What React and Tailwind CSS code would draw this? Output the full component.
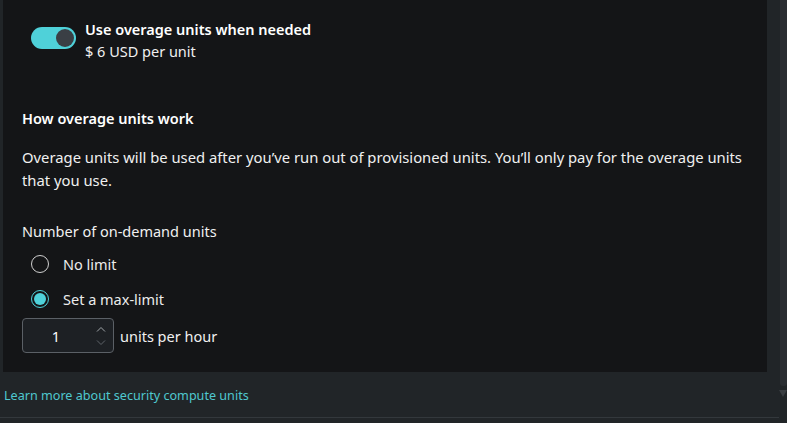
import React, { useState } from 'react';

function Toggle({ on, onChange }) {
    return (
        <button
            onClick={() => onChange(!on)}
            className={`w-[45px] h-[22px] rounded-full flex items-center px-[2px] shrink-0 ${on ? 'bg-[#4fd1d9] justify-end' : 'bg-[#3b4046] justify-start'}`}
            aria-label="Use overage units"
        >
            <span className="w-[18px] h-[18px] rounded-full bg-[#3a3f45]" />
        </button>
    );
}

function Radio({ checked, label, onClick }) {
    return (
        <label className="flex items-center h-[22px] pl-[9px] gap-[14px] cursor-pointer" onClick={onClick}>
            <span className={`w-[18px] h-[18px] rounded-full border flex items-center justify-center ${checked ? 'border-[#4fd1d9]' : 'border-[#d0d0d0]'}`}>
                {checked && <span className="w-[12px] h-[12px] rounded-full bg-[#4fd1d9]" />}
            </span>
            <span className="text-[#ececec]">{label}</span>
        </label>
    );
}

export default function App() {
    const [overage, setOverage] = useState(true);
    const [limit, setLimit] = useState('max');
    const [units, setUnits] = useState(1);

    return (
        <div className="w-[787px] h-[423px] bg-[#212528] relative overflow-hidden flex flex-col text-[14.5px] leading-[22px] text-[#f0f0f0]" style={{ fontFamily: '"Segoe UI", "Noto Sans", sans-serif' }}>
            <div className="pl-[3px] flex">
                <div className="w-[764px] h-[372px] bg-[#141517] px-[19px] pt-[18px]">
                    <div className="flex items-start gap-[9px] pl-[9px]">
                        <div className="pt-[9px]">
                            <Toggle on={overage} onChange={setOverage} />
                        </div>
                        <div>
                            <div className="font-semibold text-white">Use overage units when needed</div>
                            <div>$ 6 USD per unit</div>
                        </div>
                    </div>

                    <div className="mt-[45px] font-semibold text-white">How overage units work</div>
                    <p className="mt-[17px] leading-[23px] text-[14.8px]">
                        Overage units will be used after you’ve run out of provisioned units. You’ll only pay for the overage units that you use.
                    </p>

                    <div className="mt-[28px]">Number of on-demand units</div>
                    <div className="mt-[11px] flex flex-col gap-[13px]">
                        <Radio checked={limit === 'none'} label="No limit" onClick={() => setLimit('none')} />
                        <Radio checked={limit === 'max'} label="Set a max-limit" onClick={() => setLimit('max')} />
                    </div>
                    <div className="mt-[8px] flex items-center gap-[6px]">
                        <div className="w-[92px] h-[35px] rounded-[4px] border border-[#5b6066] bg-[#1d2024] flex items-center">
                            <span className="flex-1 text-center text-white">{units}</span>
                            <div className="w-[24px] flex flex-col items-center gap-[8px] text-[#a0a4a8]">
                                <button onClick={() => setUnits(units + 1)} aria-label="Increase">
                                    <svg width="10" height="6" viewBox="0 0 10 6" fill="none" stroke="currentColor" strokeWidth="1"><path d="M1 5.5 5 1.5 9 5.5" /></svg>
                                </button>
                                <button onClick={() => setUnits(Math.max(1, units - 1))} aria-label="Decrease" className="text-[#5f6368]">
                                    <svg width="10" height="6" viewBox="0 0 10 6" fill="none" stroke="currentColor" strokeWidth="1"><path d="M1 0.5 5 4.5 9 0.5" /></svg>
                                </button>
                            </div>
                        </div>
                        <span>units per hour</span>
                    </div>
                </div>
            </div>

            <div className="pl-[4px] pt-[13px] text-[12.6px] text-[#4fc8cf]">
                <a href="#">Learn more about security compute units</a>
            </div>

            <div className="absolute left-0 right-[8px] top-[417px] h-px bg-[#33383c]" />

            <div className="absolute right-0 top-0 w-[7px] h-[386px] bg-[#2a2e32] rounded-b-[3px]" />
            <div className="absolute right-0 top-[390px] w-0 h-0 border-l-[4px] border-r-[4px] border-t-[7px] border-l-transparent border-r-transparent border-t-[#3a3e42]" />
        </div>
    );
}
